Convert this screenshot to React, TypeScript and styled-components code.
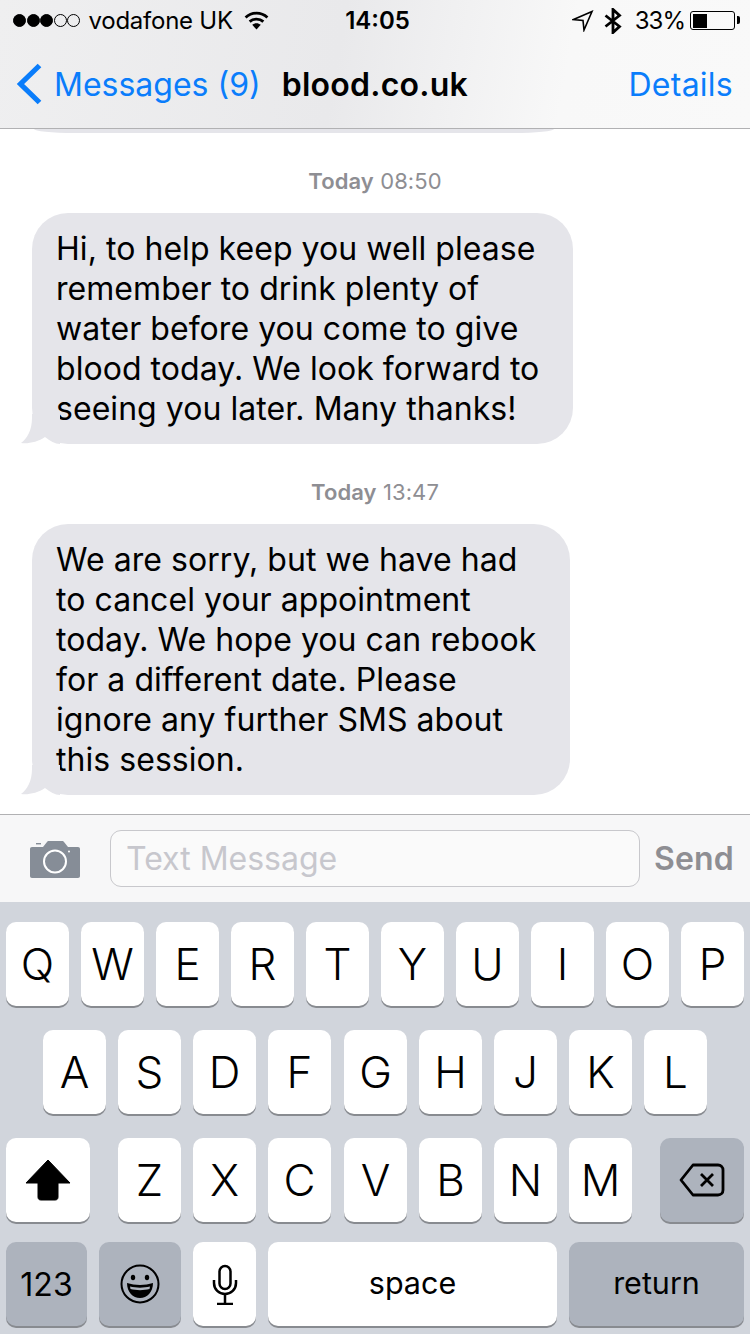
import React from 'react';
import styled, { createGlobalStyle } from 'styled-components';

const GlobalStyle = createGlobalStyle`
  html, body {
    margin: 0;
    padding: 0;
    background: #fff;
  }
  * {
    box-sizing: border-box;
  }
`;

const Screen = styled.div`
  width: 750px;
  height: 1334px;
  overflow: hidden;
  display: flex;
  flex-direction: column;
  font-family: Inter, 'Liberation Sans', sans-serif;
  color: #000;
`;

const Header = styled.header`
  height: 129px;
  flex: none;
  border-bottom: 1px solid #b1b1b3;
  background: linear-gradient(100deg, #efeff0 0%, #e9e9eb 45%, #f8f8f8 75%, #f9f9f9 100%);
`;

const StatusBar = styled.div`
  height: 41px;
  display: grid;
  grid-template-columns: 1fr auto 1fr;
  align-items: center;
  padding: 0 15px 0 13px;
  font-size: 24px;
`;

const StatusLeft = styled.div`
  display: flex;
  align-items: center;
`;

const StatusRight = styled.div`
  display: flex;
  align-items: center;
  justify-content: flex-end;
`;

const Signal = styled.span<{ $on?: boolean }>`
  width: 13px;
  height: 13px;
  margin-right: 0.5px;
  border-radius: 50%;
  border: 1.2px solid #000;
  background: ${(p) => (p.$on ? '#000' : 'transparent')};
`;

const Carrier = styled.span`
  margin-left: 8px;
  margin-right: 11px;
  letter-spacing: -0.25px;
`;

const Time = styled.span`
  font-weight: 600;
  font-size: 24px;
  margin-left: 7px;
`;

const Percent = styled.span`
  margin-left: 13px;
  margin-right: 5px;
  letter-spacing: -1px;
`;

const Battery = styled.div`
  width: 45px;
  height: 19px;
  border: 1.5px solid #000;
  border-radius: 3px;
  padding: 1.5px;
  position: relative;

  &::before {
    content: '';
    display: block;
    width: 14px;
    height: 100%;
    background: #000;
  }

  &::after {
    content: '';
    position: absolute;
    right: -6px;
    top: 4px;
    width: 3px;
    height: 8px;
    background: #000;
    border-radius: 0 2px 2px 0;
  }
`;

const NavBar = styled.nav`
  height: 87px;
  display: flex;
  align-items: center;
  padding: 0 17px 1px 16px;
  font-size: 32px;
`;

const BackLink = styled.span`
  color: #0a7dfb;
  margin-left: 12px;
`;

const Title = styled.span`
  font-weight: 600;
  margin-left: 21px;
  letter-spacing: 0.25px;
`;

const Details = styled.span`
  color: #0a7dfb;
  margin-left: auto;
  letter-spacing: 0.25px;
`;

const Thread = styled.main`
  flex: 1;
  min-height: 0;
  display: flex;
  flex-direction: column;
  background: #fff;
`;

const PrevBubble = styled.div`
  width: 520px;
  height: 4px;
  margin-left: 34px;
  background: #e5e5ea;
  border-radius: 0 0 40px 40px / 0 0 4px 4px;
`;

const Stamp = styled.div<{ $top: number }>`
  margin-top: ${(p) => p.$top}px;
  height: 24px;
  line-height: 24px;
  text-align: center;
  font-size: 22px;
  letter-spacing: 0.1px;
  color: #8e8e93;
  & b {
    font-weight: 600;
  }
`;

const Bubble = styled.div<{ $width: number }>`
  position: relative;
  width: ${(p) => p.$width}px;
  margin: 20px 0 0 32px;
  padding: 16px 24px 15px;
  background: #e5e5ea;
  border-radius: 36px;
  font-size: 32px;
  line-height: 40px;
  letter-spacing: 0.05px;
  white-space: nowrap;
`;

const Tail = styled.svg`
  position: absolute;
  left: -12px;
  bottom: 0;
  width: 40px;
  height: 30px;
`;

const InputBar = styled.div`
  height: 88px;
  flex: none;
  display: flex;
  align-items: center;
  padding: 0 16px 0 30px;
  background: #f7f7f8;
  border-top: 1px solid #b1b1b3;
`;

const TextField = styled.div`
  width: 530px;
  height: 57px;
  margin-left: 30px;
  padding-left: 15px;
  display: flex;
  align-items: center;
  background: #fafafa;
  border: 1px solid #c8c8cc;
  border-radius: 11px;
  font-size: 32px;
  color: #c7c7cd;
`;

const SendLabel = styled.span`
  margin-left: auto;
  font-size: 32px;
  font-weight: 600;
  letter-spacing: 0.2px;
  color: #8e8e93;
`;

const Keyboard = styled.div`
  flex: none;
  height: 432px;
  padding: 20px 6px 0;
  background: #d1d5dc;
  display: flex;
  flex-direction: column;
`;

const KeyRow = styled.div<{ $inset?: number; $bottom?: number }>`
  display: flex;
  gap: 12px;
  padding: 0 ${(p) => p.$inset ?? 0}px;
  margin-bottom: ${(p) => p.$bottom ?? 24}px;
`;

const SplitRow = styled(KeyRow)`
  justify-content: space-between;
`;

const KeyGroup = styled.div`
  display: flex;
  gap: 12px;
`;

const Key = styled.div<{
  $width?: number;
  $dark?: boolean;
  $size?: number;
  $lift?: number;
  $nudge?: boolean;
  $grow?: boolean;
}>`
  width: ${(p) => (p.$width ? `${p.$width}px` : '63px')};
  flex: ${(p) => (p.$grow ? '1' : 'none')};
  height: 84px;
  margin-left: ${(p) => (p.$nudge ? '1px' : '0')};
  padding-bottom: ${(p) => p.$lift ?? 0}px;
  display: flex;
  align-items: center;
  justify-content: center;
  border-radius: 10px;
  background: ${(p) => (p.$dark ? '#adb3bd' : '#fff')};
  box-shadow: 0 2px 0 #888b90;
  font-size: ${(p) => p.$size ?? 44}px;
  font-weight: ${(p) => ((p.$size ?? 44) < 40 ? 400 : 300)};
`;

const Wifi = () => (
  <svg width="25" height="19" viewBox="0 0 26 20">
    <path d="M13 19.500L8.500 14.500C11.200 12.300 14.800 12.300 17.500 14.500Z" fill="#000" />
    <path d="M5.800 11.200C9.800 7.600 16.200 7.600 20.200 11.200" fill="none" stroke="#000" strokeWidth="3" />
    <path d="M1.500 6.800C8.200 0.800 17.800 0.800 24.500 6.800" fill="none" stroke="#000" strokeWidth="3" />
  </svg>
);

const LocationArrow = () => (
  <svg width="22" height="22" viewBox="0 0 22 22" style={{ marginRight: 10 }}>
    <path d="M20 1.5L1.5 9.5L11 10.500L12 20Z" fill="none" stroke="#000" strokeWidth="1.6" />
  </svg>
);

const Bluetooth = () => (
  <svg width="18" height="26" viewBox="0 0 18 26">
    <path d="M1.500 7.500L15.500 18.500L9 24.500V1.500L15.500 7.500L1.500 18.500" fill="none" stroke="#000" strokeWidth="2.800" />
  </svg>
);

const BackChevron = () => (
  <svg width="26" height="42" viewBox="0 0 26 42">
    <path d="M23.5 2.5L4.5 21L23.5 39.5" fill="none" stroke="#0a7dfb" strokeWidth="5.2" />
  </svg>
);

const BubbleTail = () => (
  <Tail viewBox="0 0 40 30">
    <path d="M12 0V4C12 16 7 25 1 29C8 30 18 28 25 23C30 27 35 30 40 30V0Z" fill="#e5e5ea" />
  </Tail>
);

const Camera = () => (
  <svg width="50" height="38" viewBox="0 0 50 38">
    <path
      d="M2 7H13L17 2C17.500 1.400 18 1 19 1H32C33 1 33.500 1.400 34 2L38 7H48C49.200 7 50 7.800 50 9V36C50 37.200 49.200 38 48 38H2C0.800 38 0 37.200 0 36V9C0 7.800 0.800 7 2 7Z"
      fill="#868d97"
    />
    <rect x="6" y="3" width="5" height="1.400" fill="#868d97" />
    <circle cx="25" cy="21.500" r="11" fill="none" stroke="#fff" strokeWidth="2" />
    <circle cx="39" cy="11.500" r="1" fill="#fff" />
  </svg>
);

const ShiftArrow = () => (
  <svg width="46" height="42" viewBox="0 0 46 42">
    <path
      d="M23 1L45 24H33V38C33 40 32 41 30 41H16C14 41 13 40 13 38V24H1Z"
      fill="#000"
      stroke="#000"
      strokeWidth="1"
      strokeLinejoin="round"
    />
  </svg>
);

const DeleteIcon = () => (
  <svg width="46" height="34" viewBox="0 0 46 34">
    <path
      d="M14 2H39C42 2 44 4 44 7V27C44 30 42 32 39 32H14L2 17Z"
      fill="none"
      stroke="#000"
      strokeWidth="2.800"
      strokeLinejoin="round"
    />
    <path d="M22 11L34 23M34 11L22 23" fill="none" stroke="#000" strokeWidth="2.800" />
  </svg>
);

const Emoji = () => (
  <svg width="40" height="40" viewBox="0 0 40 40">
    <circle cx="20" cy="20" r="18.500" fill="none" stroke="#000" strokeWidth="2" />
    <ellipse cx="13" cy="13.500" rx="2.200" ry="2.800" fill="#000" />
    <ellipse cx="27" cy="13.500" rx="2.200" ry="2.800" fill="#000" />
    <path d="M7 19C15 21.500 25 21.500 33 19C33 28 27 34 20 34C13 34 7 28 7 19Z" fill="#000" />
    <path d="M10 22.500C16 24 24 24 30 22.500L29.500 25C24 26.500 16 26.500 10.500 25Z" fill="#adb3bd" />
  </svg>
);

const Mic = () => (
  <svg width="26" height="42" viewBox="0 0 26 42">
    <rect x="7.500" y="3" width="11" height="23" rx="5.500" fill="none" stroke="#000" strokeWidth="2.500" />
    <path d="M2 17V20C2 26.500 7 31 13 31C19 31 24 26.500 24 20V17" fill="none" stroke="#000" strokeWidth="2.500" />
    <path d="M13 31V40M5 41H21" fill="none" stroke="#000" strokeWidth="2.500" />
  </svg>
);

const rowOne = ['Q', 'W', 'E', 'R', 'T', 'Y', 'U', 'I', 'O', 'P'];
const rowTwo = ['A', 'S', 'D', 'F', 'G', 'H', 'J', 'K', 'L'];
const rowThree = ['Z', 'X', 'C', 'V', 'B', 'N', 'M'];

const App: React.FC = () => (
  <>
    <GlobalStyle />
    <Screen>
      <Header>
        <StatusBar>
          <StatusLeft>
            <Signal $on />
            <Signal $on />
            <Signal $on />
            <Signal />
            <Signal />
            <Carrier>vodafone UK</Carrier>
            <Wifi />
          </StatusLeft>
          <Time>14:05</Time>
          <StatusRight>
            <LocationArrow />
            <Bluetooth />
            <Percent>33%</Percent>
            <Battery />
          </StatusRight>
        </StatusBar>
        <NavBar>
          <BackChevron />
          <BackLink>Messages (9)</BackLink>
          <Title>blood.co.uk</Title>
          <Details>Details</Details>
        </NavBar>
      </Header>
      <Thread>
        <PrevBubble />
        <Stamp $top={36}>
          <b>Today</b> 08:50
        </Stamp>
        <Bubble $width={541}>
          Hi, to help keep you well please
          <br />
          remember to drink plenty of
          <br />
          water before you come to give
          <br />
          blood today. We look forward to
          <br />
          seeing you later. Many thanks!
          <BubbleTail />
        </Bubble>
        <Stamp $top={36}>
          <b>Today</b> 13:47
        </Stamp>
        <Bubble $width={538}>
          We are sorry, but we have had
          <br />
          to cancel your appointment
          <br />
          today. We hope you can rebook
          <br />
          for a different date. Please
          <br />
          ignore any further SMS about
          <br />
          this session.
          <BubbleTail />
        </Bubble>
      </Thread>
      <InputBar>
        <Camera />
        <TextField>Text Message</TextField>
        <SendLabel>Send</SendLabel>
      </InputBar>
      <Keyboard>
        <KeyRow>
          {rowOne.map((k) => (
            <Key key={k}>{k}</Key>
          ))}
        </KeyRow>
        <KeyRow $inset={37}>
          {rowTwo.map((k) => (
            <Key key={k} $nudge={k === 'G'}>
              {k}
            </Key>
          ))}
        </KeyRow>
        <SplitRow $bottom={20}>
          <Key $width={84}>
            <ShiftArrow />
          </Key>
          <KeyGroup>
            {rowThree.map((k) => (
              <Key key={k} $nudge={k === 'V'}>
                {k}
              </Key>
            ))}
          </KeyGroup>
          <Key $width={84} $dark>
            <DeleteIcon />
          </Key>
        </SplitRow>
        <KeyRow>
          <Key $width={81} $dark $size={32}>
            123
          </Key>
          <Key $width={82} $dark>
            <Emoji />
          </Key>
          <Key>
            <Mic />
          </Key>
          <Key $width={289} $size={30.5} $lift={3}>
            space
          </Key>
          <Key $grow $dark $size={30.5} $lift={3}>
            return
          </Key>
        </KeyRow>
      </Keyboard>
    </Screen>
  </>
);

export default App;
